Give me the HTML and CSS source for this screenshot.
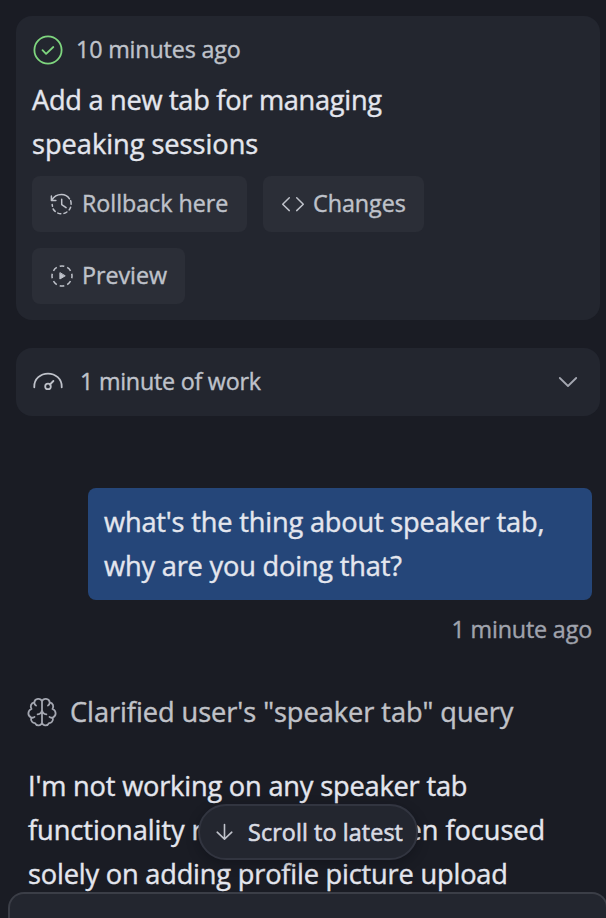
FILE: index.html
```html
<!DOCTYPE html>
<html lang="en">
<head>
<meta charset="utf-8">
<title>Agent chat</title>
<link rel="stylesheet" href="styles.css">
</head>
<body>
<main class="chat">
  <section class="card checkpoint">
    <div class="checkpoint-head">
      <svg class="icon ok" width="32" height="32" viewBox="0 0 32 32"><circle cx="16" cy="16" r="13.6"/><path d="M10.500 16.200l3.600 3.600 7.200-6.800"/></svg>
      <span class="small">10 minutes ago</span>
    </div>
    <h2 class="title"><span class="title-a">Add a new tab for managing</span><br>speaking sessions</h2>
    <div class="actions">
      <button class="btn rollback">
        <svg class="icon" width="24" height="24" viewBox="0 0 24 24"><path d="M1.400 4v4.500h4.500M1.800 8.200C3.700 4.700 7.200 2.500 11.500 2.500c3.500 0 6.300 1.700 8 4.300M20.700 8.800a10 10 0 0 1 .4 3.400M20.600 15.200a9.700 9.700 0 0 1-1.400 2.700M16.900 20a9.600 9.600 0 0 1-2.900 1.400M10.800 21.700a9.600 9.600 0 0 1-3-.6M5.200 19.400a9.600 9.600 0 0 1-2-2.400M2.500 14.200a9.600 9.600 0 0 1-.3-1.700M11.700 7.200v5.400l4.400 3"/></svg>
        <span>Rollback here</span>
      </button>
      <button class="btn changes">
        <svg class="icon" width="24" height="24" viewBox="0 0 24 24"><path d="M8.300 5.800L1.700 12.200l6.600 6.400M15.700 5.800l6.600 6.400-6.600 6.400"/></svg>
        <span>Changes</span>
      </button>
      <button class="btn preview">
        <svg class="icon" width="24" height="24" viewBox="0 0 24 24"><circle class="dashes" cx="12" cy="12" r="10" pathLength="80"/><path class="fill" d="M9.900 9v6l5-3z"/></svg>
        <span>Preview</span>
      </button>
    </div>
  </section>

  <section class="card work">
    <svg class="icon" width="32" height="32" viewBox="0 0 32 32"><path d="M2.300 21.300v-.9C2.300 12.900 8.400 7.600 16 7.600s13.700 5.300 13.700 12.800v.9M17.900 18.500l3.500-3.500"/><circle cx="16" cy="20.400" r="2.800"/></svg>
    <span class="small">1 minute of work</span>
    <svg class="icon chevron" width="32" height="32" viewBox="0 0 32 32"><path d="M7.800 12l8.200 8 8.200-8"/></svg>
  </section>

  <section class="message">
    <p class="bubble">what's the thing about speaker tab,<br>why are you doing that?</p>
    <span class="small sent">1 minute ago</span>
  </section>

  <section class="thought">
    <svg class="icon" width="32" height="32" viewBox="0 0 32 32"><path d="M16 5v22M16 5.300C14.800 1.800 8.800 1.900 8.300 6.300 5 7 3.900 10.400 5.500 13 1.400 14.600 1.400 20 5.200 21.500 4.300 25.200 7 27.200 9 27.100c1.500 3.300 6 3 7-.3M16 5.300c1.200-3.500 7.200-3.400 7.700 1 3.300.7 4.400 4.100 2.800 6.700 4.100 1.600 4.100 7 .3 8.500.9 3.700-1.800 5.700-3.800 5.600-1.500 3.300-6 3-7-.3M11.600 18.400c2.300-.3 4-1.700 4.400-4.300.4 2.600 2.100 4 4.400 4.300M8.300 6.300c0 1.500.6 2.600 1.700 3.200M23.700 6.300c0 1.500-.6 2.600-1.700 3.200M5.200 21.500c1.300.5 2.500.2 3.300-.6M26.800 21.500c-1.300.5-2.500.2-3.300-.6"/></svg>
    <span>Clarified user's "speaker tab" query</span>
  </section>

  <p class="reply">I'm not working on any speaker tab<br><span class="reply-b">functionality right now. I've been focused</span><br>solely on adding profile picture upload</p>
</main>

<button class="scroll">
  <svg class="icon" width="24" height="24" viewBox="0 0 24 24"><path d="M12.500 4.500v14.500M5.200 12.200l7.300 6.900 7.300-6.900"/></svg>
  <span>Scroll to latest</span>
</button>
<div class="composer"></div>
</body>
</html>
```
FILE: styles.css
```css
* { box-sizing: border-box; }
body {
  margin: 0;
  height: 918px;
  position: relative;
  overflow: hidden;
  background: #1a1c24;
  color: #e4e6ee;
  font-family: "Open Sans", "Noto Sans", sans-serif;
  font-size: 27.2px;
  line-height: 44px;
  letter-spacing: -0.18px;
  white-space: nowrap;
  -webkit-text-stroke: 0.4px currentColor;
}
h2, p { margin: 0; font: inherit; }
button {
  border: 0;
  color: inherit;
  font: inherit;
  letter-spacing: inherit;
}
.icon {
  flex: none;
  fill: none;
  stroke: currentColor;
  stroke-width: 1.8;
  stroke-linecap: round;
  stroke-linejoin: round;
}
.chat { height: 918px; overflow: hidden; padding: 16px 6px 0 16px; }
.card {
  background: #23262f;
  border-radius: 16px;
  padding: 16px;
  color: #bfc2ca;
}
.small { font-size: 23.3px; line-height: 34px; padding-bottom: 2px; letter-spacing: -0.16px; }
.checkpoint { height: 304px; }
.checkpoint-head { display: flex; align-items: center; gap: 12px; height: 36px; }
.ok { color: #7fd67f; }
.title { margin-top: 10px; color: #e4e6ee; letter-spacing: -0.02px; }
.title-a { letter-spacing: -0.28px; }
.actions { display: flex; flex-wrap: wrap; gap: 16px; margin-top: 10px; }
.btn {
  display: flex;
  align-items: center;
  gap: 8px;
  height: 56px;
  padding: 0 18px;
  border-radius: 8px;
  background: #2b2e37;
  font-size: 23.3px;
  letter-spacing: -0.04px;
}
.btn span { padding-bottom: 2px; }
.btn .icon { stroke-width: 1.5; }
.rollback { width: 215px; }
.changes { width: 161px; }
.preview { width: 153px; }
.dashes { stroke-dasharray: 6 4; stroke-dashoffset: 3; stroke-linecap: butt; }
.icon .fill { fill: currentColor; stroke-width: 1; }
.work { display: flex; align-items: center; gap: 16px; height: 68px; margin-top: 28px; }
.work .small { letter-spacing: -0.24px; }
.chevron { margin-left: auto; color: #a4a7b1; }
.message {
  display: flex;
  flex-direction: column;
  align-items: flex-end;
  margin: 72px 8px 0 0;
}
.bubble {
  width: 504px;
  height: 112px;
  padding: 12px 16px;
  border-radius: 8px;
  background: #254679;
}
.sent { margin-top: 12px; color: #a0a3ad; }
.thought {
  display: flex;
  align-items: center;
  gap: 12px;
  margin: 42px 0 0 10px;
  color: #c0c2c8;
  letter-spacing: -0.05px;
}
.thought .icon { color: #a4a7b1; }
.reply { margin: 30px 0 0 12px; }
.reply-b { letter-spacing: -0.05px; }
.scroll {
  position: absolute;
  left: 198px;
  top: 804px;
  width: 220px;
  height: 56px;
  display: flex;
  align-items: center;
  gap: 12px;
  padding: 0 12px;
  border: 2px solid #323540;
  border-radius: 28px;
  background: #23262f;
  box-shadow: 0 4px 12px rgba(10, 11, 16, 0.35);
  color: #d9dbe3;
  font-size: 23.3px;
  letter-spacing: 0.11px;
  -webkit-text-stroke-width: 0.6px;
}
.scroll .icon { stroke-width: 1.6; color: #bfc2ca; }
.composer {
  position: absolute;
  left: 8px;
  top: 892px;
  width: 600px;
  height: 26px;
  border: 2px solid #3b3e47;
  border-bottom: 0;
  border-radius: 16px 16px 0 0;
  background: #23262f;
}
```
